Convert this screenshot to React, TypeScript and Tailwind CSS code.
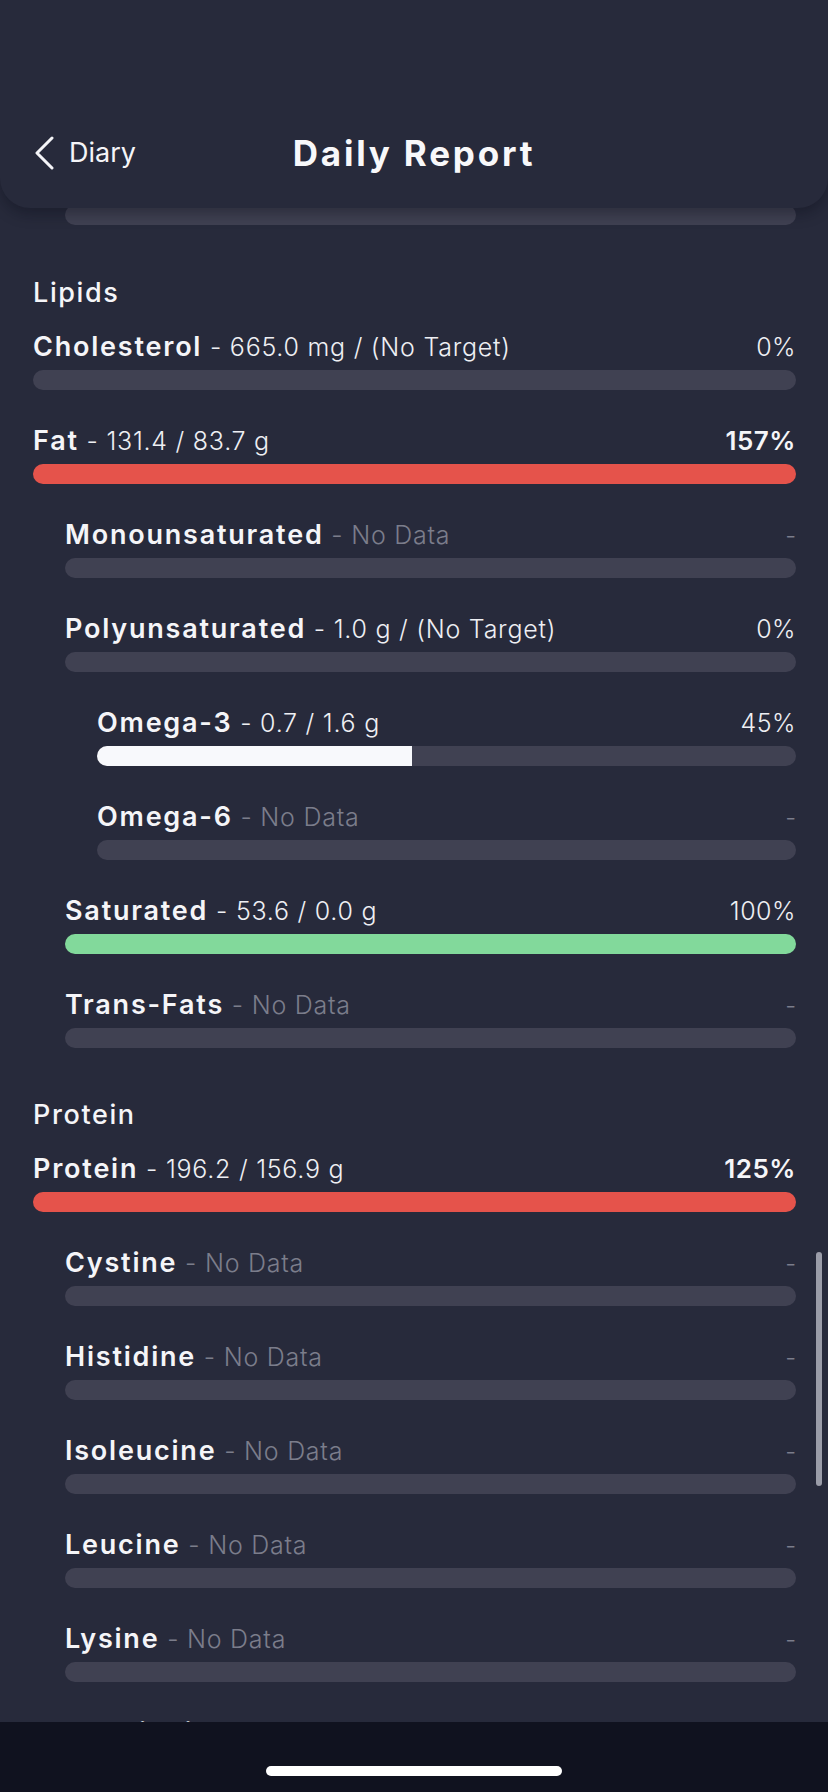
import React from "react";

type Row = {
  name: string;
  value?: string;
  percent?: string;
  level: 0 | 1 | 2;
  fill?: number;
  color?: "red" | "green" | "white";
  over?: boolean;
};

type Section = {
  title: string;
  rows: Row[];
};

const sections: Section[] = [
  {
    title: "Lipids",
    rows: [
      { name: "Cholesterol", value: "665.0 mg / (No Target)", percent: "0%", level: 0, fill: 0 },
      { name: "Fat", value: "131.4 / 83.7 g", percent: "157%", level: 0, fill: 100, color: "red", over: true },
      { name: "Monounsaturated", level: 1 },
      { name: "Polyunsaturated", value: "1.0 g / (No Target)", percent: "0%", level: 1, fill: 0 },
      { name: "Omega-3", value: "0.7 / 1.6 g", percent: "45%", level: 2, fill: 45, color: "white" },
      { name: "Omega-6", level: 2 },
      { name: "Saturated", value: "53.6 / 0.0 g", percent: "100%", level: 1, fill: 100, color: "green" },
      { name: "Trans-Fats", level: 1 },
    ],
  },
  {
    title: "Protein",
    rows: [
      { name: "Protein", value: "196.2 / 156.9 g", percent: "125%", level: 0, fill: 100, color: "red", over: true },
      { name: "Cystine", level: 1 },
      { name: "Histidine", level: 1 },
      { name: "Isoleucine", level: 1 },
      { name: "Leucine", level: 1 },
      { name: "Lysine", level: 1 },
      { name: "Methionine", level: 1 },
    ],
  },
];

const indent = {
  0: "pl-[33px]",
  1: "pl-[65px]",
  2: "pl-[97px]",
};

const fillColor = {
  red: "bg-[#e5534b]",
  green: "bg-[#82d99b]",
  white: "bg-[#f8f9fc]",
};

function Bar({ fill = 0, color }: { fill?: number; color?: Row["color"] }) {
  return (
    <div className="h-[20px] w-full overflow-hidden rounded-full bg-[#404152]">
      {fill > 0 && color && (
        <div className={`h-full ${fillColor[color]}`} style={{ width: `${fill}%` }} />
      )}
    </div>
  );
}

function NutrientRow({ row }: { row: Row }) {
  const noData = !row.value;

  return (
    <div className={`flex flex-col pb-[35px] pr-[32px] ${indent[row.level]}`}>
      <div className="flex h-[32px] items-baseline justify-between leading-[32px]">
        <p className="whitespace-nowrap">
          <span className="text-[27px] font-semibold tracking-[0.066em] text-[#f5f5f8]">
            {row.name}
          </span>
          {noData ? (
            <span className="text-[25px] font-light tracking-[0.03em] text-[#7b7d8b]"> - No Data</span>
          ) : (
            <span className="text-[25px] font-light tracking-[0.03em] text-[#eeeff3]"> - {row.value}</span>
          )}
        </p>
        {noData ? (
          <span className="text-[24px] font-light text-[#7b7d8b]">-</span>
        ) : row.over ? (
          <span className="text-[26px] font-semibold tracking-[0.02em] text-[#f5f5f8]">
            {row.percent}
          </span>
        ) : (
          <span className="text-[25px] font-light tracking-[0.02em] text-[#eeeff3]">{row.percent}</span>
        )}
      </div>
      <div className="mt-[7px]">
        <Bar fill={row.fill} color={row.color} />
      </div>
    </div>
  );
}

export default function App() {
  return (
    <div
      className="relative flex h-[1792px] w-[828px] flex-col overflow-hidden bg-[#272a3b]"
      style={{ fontFamily: "Inter, 'Noto Sans', sans-serif" }}
    >
      <header className="relative z-10 flex h-[208px] shrink-0 flex-col justify-end rounded-b-[30px] bg-[#272a3b] pb-[25px] shadow-[0_6px_14px_rgba(10,12,24,0.35)]">
        <div className="grid h-[60px] grid-cols-[1fr_auto_1fr] items-center">
          <div className="flex items-center gap-[15px] pl-[34px]">
            <svg width="20" height="34" viewBox="0 0 20 34" fill="none">
              <polyline
                points="18,2 3,17 18,32"
                stroke="#f5f5f8"
                strokeWidth="3"
                strokeLinecap="round"
                strokeLinejoin="round"
              />
            </svg>
            <span className="text-[27px] font-normal text-[#f5f5f8]">Diary</span>
          </div>
          <h1 className="text-[35px] font-bold tracking-[0.08em] text-[#f8f8fa]">
            Daily Report
          </h1>
          <div />
        </div>
      </header>

      <main className="-mt-[3px] flex-1 overflow-hidden">
        <div className="pl-[65px] pr-[32px]">
          <Bar />
        </div>

        {sections.map((section, i) => (
          <section key={section.title} className={i === 0 ? "mt-[53px]" : "mt-[17px]"}>
            <h2 className="mb-[23px] pl-[33px] text-[27px] font-medium leading-[30px] tracking-[0.06em] text-[#f5f5f8]">
              {section.title}
            </h2>
            {section.rows.map((row) => (
              <NutrientRow key={row.name} row={row} />
            ))}
          </section>
        ))}
      </main>

      <footer className="flex h-[70px] shrink-0 justify-center bg-[#10121f] pt-[44px]">
        <div className="h-[10px] w-[296px] rounded-full bg-white" />
      </footer>

      <div className="absolute left-[816px] top-[1252px] h-[234px] w-[6px] rounded-full bg-[#9a9ca8]" />
    </div>
  );
}
